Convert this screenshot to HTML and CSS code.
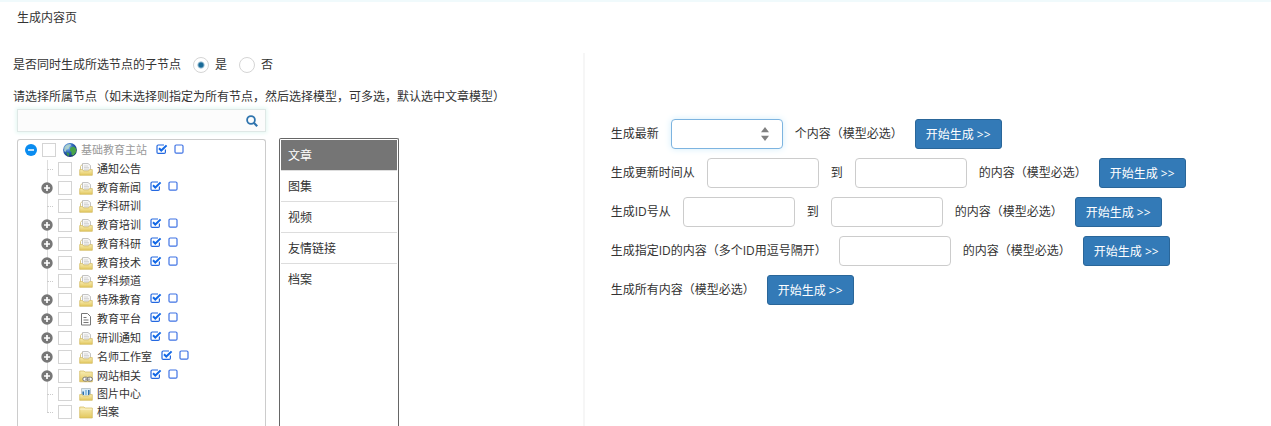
FILE: index.html
```html
<!DOCTYPE html>
<html lang="zh-CN">
  <head>
    <meta charset="UTF-8">
    <title>生成内容页</title>
    <meta name="viewport" content="width=device-width, initial-scale=1.0">
    <link rel="stylesheet" href="styles.css">
  </head>

  <body>
    <svg class="sprite" aria-hidden="true">
      <defs>
        <linearGradient id="folder-fill" x1="0" y1="0" x2="0" y2="1">
          <stop offset="0" stop-color="#f8edb4"/>
          <stop offset="1" stop-color="#e3c75c"/>
        </linearGradient>
        <radialGradient id="sea" cx="0.35" cy="0.3" r="0.8">
          <stop offset="0" stop-color="#8fc4f5"/>
          <stop offset="0.5" stop-color="#2b62b8"/>
          <stop offset="1" stop-color="#0d2560"/>
        </radialGradient>
      </defs>
      <symbol id="icon-minus" viewBox="0 0 12 12">
        <circle cx="6" cy="6" r="6" fill="#0a8cf0"/>
        <path d="M3 6h6" stroke="#fff" stroke-width="1.6"/>
      </symbol>
      <symbol id="icon-plus" viewBox="0 0 12 12">
        <circle cx="6" cy="6" r="5.7" fill="#777"/>
        <path d="M3 6h6M6 3v6" stroke="#fff" stroke-width="1.7"/>
      </symbol>
      <symbol id="icon-globe" viewBox="0 0 14 14">
        <circle cx="7" cy="7" r="6.9" fill="url(#sea)"/>
        <path d="M1.5 4Q4 0.6 7.5 1L8 2.6 6 4.2 5.6 6 3.6 6.6 2.6 9 1 8Z" fill="#b9d9c8" opacity="0.8"/>
        <path d="M7.4 4.4L11 3.4 13.4 6 12.8 9.4 10.5 12.4 8.6 12 8.4 9 6.8 7.6Z" fill="#47a34b"/>
        <path d="M3.4 9L6.4 10.3 6 13 4.2 12.4Z" fill="#3c9650"/>
      </symbol>
      <symbol id="icon-docs" viewBox="0 0 14 14">
        <path d="M1.5 8V4.5L3 2.5H4" fill="none" stroke="#d9c987"/>
        <path d="M3.5 9V1.5H9L11.5 3.5V9Z" fill="#f7f7f7" stroke="#b5b5b5" stroke-width="0.8"/>
        <path d="M5 4h4M5 5.6h5M5 7.2h5" stroke="#c4c4c4" stroke-width="0.7"/>
        <path d="M0.7 7.6H3.6L4.6 9H9.6L10.5 7.6H13.3V13.3H0.7Z" fill="url(#folder-fill)" stroke="#d2b95c" stroke-width="0.7"/>
      </symbol>
      <symbol id="icon-page" viewBox="0 0 14 14">
        <path d="M2.5 1.5H8.5L11.5 4.5V13H2.5Z" fill="#fff" stroke="#777"/>
        <path d="M4.5 5.5h3M4.5 8h5M4.5 10.5h5" stroke="#777"/>
      </symbol>
      <symbol id="icon-link" viewBox="0 0 14 14">
        <path d="M0.7 2H5L6 3H13.3V12.8H0.7Z" fill="url(#folder-fill)" stroke="#d2b95c" stroke-width="0.7"/>
        <rect x="3.8" y="8.2" width="5.4" height="3.8" rx="1.9" fill="#fff" stroke="#777"/>
        <rect x="8" y="8.2" width="5.4" height="3.8" rx="1.9" fill="#fff" stroke="#777"/>
        <path d="M6 10.1h5" stroke="#777"/>
      </symbol>
      <symbol id="icon-picture" viewBox="0 0 14 14">
        <path d="M2.5 10V1.5H11.5V10Z" fill="#d8eaf7" stroke="#b0bcc4" stroke-width="0.8"/>
        <path d="M4.2 8V4.5M9.8 8V3" stroke="#2f6fa8" stroke-width="1.6"/>
        <path d="M7 8V3" stroke="#5ea5d8" stroke-width="1.2"/>
        <path d="M0.7 7.6H3.2L4.2 9H9.6L10.5 7.6H13.3V13.3H0.7Z" fill="url(#folder-fill)" stroke="#d2b95c" stroke-width="0.7"/>
      </symbol>
      <symbol id="icon-folder" viewBox="0 0 14 14">
        <path d="M0.7 2H5L6 3H13.3V13H0.7Z" fill="url(#folder-fill)" stroke="#d2b95c" stroke-width="0.7"/>
        <path d="M0.9 4.2H13" stroke="#fcf5cf" stroke-width="0.8"/>
      </symbol>
      <symbol id="icon-check-all" viewBox="0 0 12 10">
        <path d="M9.4 5.5V8.2Q9.4 9.4 8.2 9.4H2.2Q1 9.4 1 8.2V2.2Q1 1 2.2 1H8" fill="none" stroke="#2468e0" stroke-width="1.2"/>
        <path d="M3 4.2L5.3 6.5 10.6 1.4" fill="none" stroke="#1268e6" stroke-width="2"/>
      </symbol>
      <symbol id="icon-check-none" viewBox="0 0 12 10">
        <rect x="2" y="1" width="8" height="8.2" rx="1.2" fill="#fff" stroke="#3f73e4" stroke-width="1.2"/>
      </symbol>
    </svg>

    <h1 class="title">生成内容页</h1>

    <div class="columns">
      <div class="left">
        <div class="option-line">
          <span>是否同时生成所选节点的子节点</span>
          <label class="radio"><input type="radio" name="children" checked>是</label>
          <label class="radio"><input type="radio" name="children">否</label>
        </div>
        <label class="hint" for="models">请选择所属节点（如未选择则指定为所有节点，然后选择模型，可多选，默认选中文章模型）</label>
        <div class="pickers">
          <div class="nodes">
            <div class="search">
              <input type="text" aria-label="搜索节点">
              <button type="button" aria-label="搜索">
                <svg width="12" height="12" viewBox="0 0 12 12">
                  <circle cx="5" cy="5" r="3.9" fill="none" stroke="#2f74ae" stroke-width="1.8"/>
                  <path d="M7.8 7.8L11.2 11.2" stroke="#2f74ae" stroke-width="2.2"/>
                </svg>
              </button>
            </div>
            <ul class="tree" id="tree"></ul>
          </div>
          <select class="models" id="models" multiple>
            <option selected>文章</option>
            <option>图集</option>
            <option>视频</option>
            <option>友情链接</option>
            <option>档案</option>
          </select>
        </div>
      </div>

      <div class="right">
        <form class="row">
          <label for="latest">生成最新</label>
          <span class="number">
            <input type="number" id="latest">
            <svg class="spinner" width="8" height="14" viewBox="0 0 8 14">
              <path d="M4 0L8 5.2H0ZM4 14L0 8.8H8Z" fill="#808080"/>
            </svg>
          </span>
          <span>个内容（模型必选）</span>
          <button type="button">开始生成 &gt;&gt;</button>
        </form>
        <form class="row">
          <label for="time-from">生成更新时间从</label>
          <input type="text" id="time-from">
          <label for="time-to">到</label>
          <input type="text" id="time-to">
          <span>的内容（模型必选）</span>
          <button type="button">开始生成 &gt;&gt;</button>
        </form>
        <form class="row">
          <label for="id-from">生成ID号从</label>
          <input type="text" id="id-from">
          <label for="id-to">到</label>
          <input type="text" id="id-to">
          <span>的内容（模型必选）</span>
          <button type="button">开始生成 &gt;&gt;</button>
        </form>
        <form class="row">
          <label for="ids">生成指定ID的内容（多个ID用逗号隔开）</label>
          <input type="text" id="ids">
          <span>的内容（模型必选）</span>
          <button type="button">开始生成 &gt;&gt;</button>
        </form>
        <form class="row">
          <span>生成所有内容（模型必选）</span>
          <button type="button">开始生成 &gt;&gt;</button>
        </form>
      </div>
    </div>

    <script src="tree.js"></script>
  </body>
</html>
```
FILE: styles.css
```css
* { box-sizing: border-box; }
body, input, button, select {
  font-family: "Open Sans", "Noto Sans CJK SC", sans-serif;
  font-size: 12px;
  color: #333;
}
body {
  margin: 0;
  height: 100vh;
  display: flex;
  flex-direction: column;
  overflow: hidden;
  background-color: #fff;
  border-top: 2px solid #f0fafc;
  line-height: 18px;
}
button {
  border: none;
  padding: 0;
  background: none;
  cursor: pointer;
}
input { margin: 0; }
.sprite {
  position: absolute;
  width: 0;
  height: 0;
}
.title {
  margin: 0;
  padding: 7px 17px 26px;
  font-size: 12px;
  font-weight: normal;
}
.columns {
  flex: 1;
  min-height: 0;
  display: flex;
}

/* node and model pickers */
.left {
  flex: 0 0 46%;
  display: flex;
  flex-direction: column;
  padding-left: 13px;
  border-right: 2px solid #f6f6f6;
}
.option-line {
  display: flex;
  align-items: center;
  gap: 12px;
  height: 24px;
}
.radio {
  display: flex;
  align-items: center;
  gap: 6px;
}
.radio input {
  appearance: none;
  width: 16px;
  height: 16px;
  border: 1px solid #d5d5d5;
  border-radius: 50%;
}
.radio input:checked {
  background: radial-gradient(circle, #186a98 2px, #fff 4px);
}
.hint {
  margin: 11px 0 3px;
}
.pickers {
  flex: 1;
  min-height: 0;
  display: flex;
  gap: 13px;
  padding-left: 4px;
}
.nodes {
  width: 249px;
  display: flex;
  flex-direction: column;
  gap: 7px;
}
.search {
  display: flex;
  flex-shrink: 0;
  height: 23px;
  background-color: #fcfcfc;
  border: 1px solid #dfe8e6;
  box-shadow: 0 0 4px 1px #e2f7f2;
}
.search input {
  flex: 1;
  min-width: 0;
  border: none;
  outline: none;
  background: none;
}
.search button {
  display: flex;
  align-items: center;
  padding: 0 7px;
}
.tree {
  flex: 1;
  min-height: 0;
  margin: 0;
  padding: 0 7px;
  overflow: hidden;
  list-style: none;
  font-size: 11px;
  border: 1px solid #ccc;
  border-bottom: none;
  border-radius: 3px 3px 0 0;
}
.tree ul {
  margin: 0;
  padding-left: 16px;
  list-style: none;
}
.node {
  display: flex;
  align-items: center;
  height: 19px;
}
.node.leaf { height: 18px; }
.root > .node { height: 20px; }
.toggle {
  display: flex;
  justify-content: center;
  width: 12px;
  margin-right: 5px;
}
/* dotted guide lines between the children */
.tree ul .node {
  background: linear-gradient(#ddd, #ddd) no-repeat 6px 0 / 1px 100%;
}
.leaf .toggle {
  height: 1px;
  margin-left: 6px;
  width: 6px;
  border-top: 1px dotted #ccc;
}
.tree ul li:last-child .node { background-size: 1px 50%; }
.node input {
  appearance: none;
  width: 14px;
  height: 14px;
  margin-right: 7px;
  background-color: #fff;
  border: 1px solid #d4d4d4;
}
.node label {
  display: flex;
  align-items: center;
  gap: 4px;
  margin-right: 9px;
}
.root > .node label { color: #999; }
.pick {
  display: flex;
  margin-right: 5px;
  padding-bottom: 3px;
}
.models {
  width: 120px;
  margin-top: 29px;
  padding: 1px;
  overflow: hidden;
  outline: none;
  background-color: #fff;
  border: 1px solid #666;
  border-bottom: none;
  border-radius: 2px 2px 0 0;
}
.models option {
  height: 31px;
  min-height: 31px;
  padding: 6px 7px;
  line-height: 18px;
  border-bottom: 1px solid #ddd;
}
.models option:last-child { border-bottom: none; }
.models option:checked {
  background: linear-gradient(#757575, #757575);
  -webkit-text-fill-color: #fff;
}

/* generate forms */
.right {
  flex: 1;
  display: flex;
  flex-direction: column;
  gap: 9px;
  padding: 66px 0 0 26px;
}
.row {
  display: flex;
  align-items: center;
  gap: 12px;
  height: 30px;
  white-space: nowrap;
}
.row input {
  width: 112px;
  height: 30px;
  padding: 4px 10px;
  border: 1px solid #ccc;
  border-radius: 4px;
  outline: none;
}
.row button {
  height: 30px;
  padding: 0 10px;
  color: #fff;
  background-color: #337ab7;
  border: 1px solid #2a6699;
  border-radius: 3px;
}
.number {
  position: relative;
  display: flex;
}
.number input {
  appearance: textfield;
  border-color: #7db4e0;
  box-shadow: 0 0 7px #d3eefb;
}
.number input::-webkit-inner-spin-button { appearance: none; }
.spinner {
  position: absolute;
  top: 8px;
  right: 14px;
  pointer-events: none;
}
```
FILE: tree.js
```js
let nodes = [
  { name: "通知公告", icon: "docs", leaf: true },
  { name: "教育新闻", icon: "docs" },
  { name: "学科研训", icon: "docs", leaf: true },
  { name: "教育培训", icon: "docs" },
  { name: "教育科研", icon: "docs" },
  { name: "教育技术", icon: "docs" },
  { name: "学科频道", icon: "docs", leaf: true },
  { name: "特殊教育", icon: "docs" },
  { name: "教育平台", icon: "page" },
  { name: "研训通知", icon: "docs" },
  { name: "名师工作室", icon: "docs" },
  { name: "网站相关", icon: "link" },
  { name: "图片中心", icon: "picture", leaf: true },
  { name: "档案", icon: "folder", leaf: true }
]

let icon = (name, width, height) =>
  `<svg width="${width}" height="${height}"><use href="#icon-${name}"/></svg>`

let renderNode = (node, id, toggle) => {
  let picks = `
    <button type="button" class="pick" aria-label="全选">${icon("check-all", 12, 10)}</button>
    <button type="button" class="pick" aria-label="取消">${icon("check-none", 12, 10)}</button>`
  return `
    <div class="node ${node.leaf ? "leaf" : ""}">
      ${node.leaf
        ? `<span class="toggle"></span>`
        : `<button type="button" class="toggle" aria-label="展开">${icon(toggle, 12, 12)}</button>`}
      <input type="checkbox" id="${id}">
      <label for="${id}">${icon(node.icon, 14, 14)}${node.name}</label>
      ${node.leaf ? "" : picks}
    </div>`
}

document.getElementById("tree").innerHTML = `
  <li class="root">
    ${renderNode({ name: "基础教育主站", icon: "globe" }, "node-root", "minus")}
    <ul>
      ${nodes.map((node, i) => `<li>${renderNode(node, "node-" + i, "plus")}</li>`).join("")}
    </ul>
  </li>`
```
